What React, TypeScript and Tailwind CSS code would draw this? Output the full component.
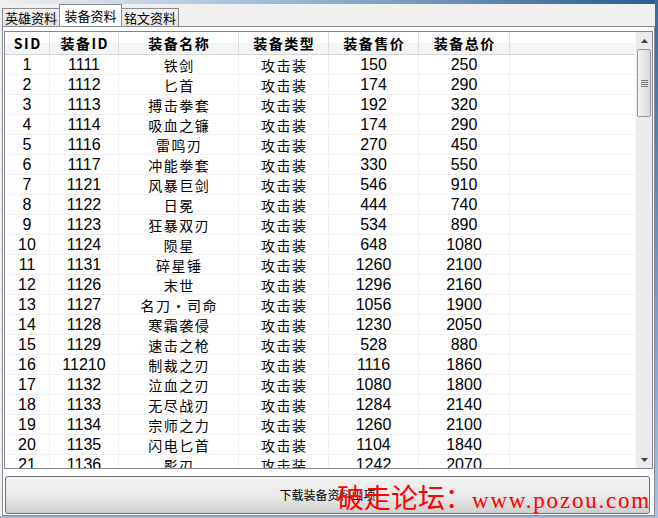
const COLS = ['w-[45px]', 'w-[69px]', 'w-[120px]', 'w-[90px]', 'w-[90px]', 'w-[91px]'];

const HEADERS = ['SID', '装备ID', '装备名称', '装备类型', '装备售价', '装备总价'];

type Row = [number, number, string, number, number];

const ROWS: Row[] = [
  [1, 1111, '铁剑', 150, 250],
  [2, 1112, '匕首', 174, 290],
  [3, 1113, '搏击拳套', 192, 320],
  [4, 1114, '吸血之镰', 174, 290],
  [5, 1116, '雷鸣刃', 270, 450],
  [6, 1117, '冲能拳套', 330, 550],
  [7, 1121, '风暴巨剑', 546, 910],
  [8, 1122, '日冕', 444, 740],
  [9, 1123, '狂暴双刃', 534, 890],
  [10, 1124, '陨星', 648, 1080],
  [11, 1131, '碎星锤', 1260, 2100],
  [12, 1126, '末世', 1296, 2160],
  [13, 1127, '名刀・司命', 1056, 1900],
  [14, 1128, '寒霜袭侵', 1230, 2050],
  [15, 1129, '速击之枪', 528, 880],
  [16, 11210, '制裁之刃', 1116, 1860],
  [17, 1132, '泣血之刃', 1080, 1800],
  [18, 1133, '无尽战刃', 1284, 2140],
  [19, 1134, '宗师之力', 1260, 2100],
  [20, 1135, '闪电匕首', 1104, 1840],
  [21, 1136, '影刃', 1242, 2070],
];

const num = "font-['Liberation_Sans','Noto_Sans_CJK_SC',sans-serif] text-[16px] text-black pt-[1px]";
const cjk = "font-['Noto_Sans_CJK_SC',sans-serif] text-[14px] tracking-[1.5px] pl-[1.5px] pt-[1px] text-black";

function Tab({ label, active }: { label: string; active?: boolean }) {
  if (active) {
    return (
      <div className="h-[22px] w-[63px] -mx-[1px] z-10 flex items-center justify-center bg-white border border-b-0 border-[#898c95] text-[13px] text-black">
        {label}
      </div>
    );
  }
  return (
    <div className="h-[18px] w-[58px] flex items-center justify-center bg-gradient-to-b from-[#f2f2f2] to-[#e3e3e3] border border-b-0 border-[#898c95] text-[13px] text-black">
      {label}
    </div>
  );
}

function Arrow({ up }: { up?: boolean }) {
  return (
    <svg width="7" height="4" viewBox="0 0 7 4">
      <path d={up ? 'M0 4 L3.5 0 L7 4 Z' : 'M0 0 L7 0 L3.5 4 Z'} fill="#404040" />
    </svg>
  );
}

function ScrollBar() {
  return (
    <div className="w-[17px] shrink-0 h-full flex flex-col bg-[#ebebeb] border-l border-[#f6f6f6]">
      <div className="h-[17px] flex items-center justify-center">
        <Arrow up />
      </div>
      <div className="h-[68px] mx-[1px] rounded-[2px] border border-[#979797] bg-gradient-to-r from-[#f3f3f3] to-[#d9d9d9] flex flex-col items-center justify-center gap-[1px]">
        <div className="w-[7px] h-px bg-[#7a7a7a]" />
        <div className="w-[7px] h-px bg-[#7a7a7a]" />
        <div className="w-[7px] h-px bg-[#7a7a7a]" />
        <div className="w-[7px] h-px bg-[#7a7a7a]" />
      </div>
      <div className="flex-1" />
      <div className="h-[17px] flex items-center justify-center">
        <Arrow />
      </div>
    </div>
  );
}

function ListView() {
  return (
    <div className="ml-[1px] mr-[1px] mt-[4px] h-[438px] border border-[#828790] bg-white flex overflow-hidden">
      <div className="flex-1 min-w-0 flex flex-col overflow-hidden">
        <div className="h-[23px] shrink-0 flex border-b border-[#d5d5d5] bg-gradient-to-b from-white from-50% to-[#f3f4f6] to-50%">
          {HEADERS.map((h, i) => (
            <div
              key={h}
              className={`${COLS[i]} shrink-0 flex items-center justify-center border-r border-[#dedede] font-['Noto_Sans_CJK_SC',sans-serif] font-bold text-[14px] tracking-[1.5px] pl-[1.5px] text-black`}
            >
              {h}
            </div>
          ))}
          <div className="flex-1" />
        </div>
        {ROWS.map((r) => (
          <div key={r[0]} className="h-[20px] shrink-0 flex border-b border-[#f0f0f0]">
            <div className={`${COLS[0]} shrink-0 flex items-center justify-center border-r border-[#f0f0f0] ${num}`}>{r[0]}</div>
            <div className={`${COLS[1]} shrink-0 flex items-center justify-center border-r border-[#f0f0f0] ${num}`}>{r[1]}</div>
            <div className={`${COLS[2]} shrink-0 flex items-center justify-center border-r border-[#f0f0f0] ${cjk}`}>{r[2]}</div>
            <div className={`${COLS[3]} shrink-0 flex items-center justify-center border-r border-[#f0f0f0] ${cjk}`}>攻击装</div>
            <div className={`${COLS[4]} shrink-0 flex items-center justify-center border-r border-[#f0f0f0] ${num}`}>{r[3]}</div>
            <div className={`${COLS[5]} shrink-0 flex items-center justify-center border-r border-[#f0f0f0] ${num}`}>{r[4]}</div>
            <div className="flex-1" />
          </div>
        ))}
      </div>
      <ScrollBar />
    </div>
  );
}

export default function App() {
  return (
    <div className="relative w-[658px] h-[518px] flex bg-[#f0f0f0] font-['Noto_Sans_CJK_SC',sans-serif] overflow-hidden">
      <div className="w-[655px] flex flex-col">
        <div className="h-[4px] bg-gradient-to-r from-[#f0f0f0] via-[#8fb0d0] to-[#2d5c8c]" />
        <div className="h-[22px] pl-[2px] flex items-end">
          <Tab label="英雄资料" />
          <Tab label="装备资料" active />
          <Tab label="铭文资料" />
        </div>
        <div className="ml-[2px] w-[653px] h-[490px] border border-[#898c95] bg-white flex flex-col">
          <ListView />
          <button className="mt-[7px] ml-[2px] w-[645px] h-[38px] rounded-[3px] border border-[#707070] bg-gradient-to-b from-[#f2f2f2] via-[#ebebeb] via-50% to-[#cfcfcf] text-[12px] text-black font-['Noto_Sans_CJK_SC',sans-serif]">
            下载装备资料山项
          </button>
        </div>
        <div className="flex-1 bg-[#9bb7d3]" />
      </div>
      <div className="w-[3px] bg-gradient-to-b from-[#3c6a98] to-[#a9c4e0]" />
      <div className="absolute left-[337px] top-[483px] flex items-baseline text-[#ff0000] leading-none pointer-events-none">
        <span className="font-['Noto_Sans_CJK_SC',serif] text-[27px]">破走论坛：</span>
        <span className="font-['Liberation_Serif',serif] text-[23px] tracking-[1.8px]">www.pozou.com</span>
      </div>
    </div>
  );
}
